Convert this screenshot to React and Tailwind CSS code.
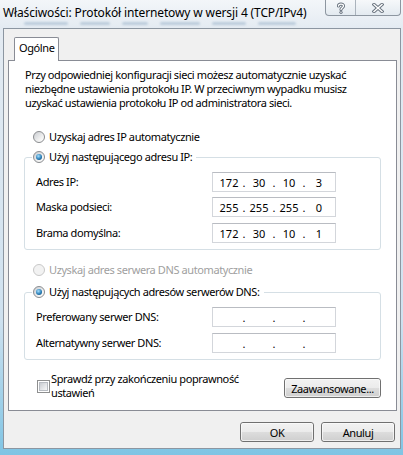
import React from "react";

function Radio({ checked, disabled }) {
  return (
    <span
      className={
        disabled
          ? "relative inline-block w-[12px] h-[12px] rounded-full border border-[#c8c8c8] bg-[#f2f2f2] shrink-0"
          : "relative inline-block w-[12px] h-[12px] rounded-full border border-[#8a8c8f] bg-[linear-gradient(135deg,#c9ccd1_0%,#f4f4f4_70%,#ffffff_100%)] shrink-0"
      }
    >
      {checked && (
        <span className="absolute left-[2px] top-[2px] w-[6px] h-[6px] rounded-full bg-[radial-gradient(circle_at_40%_35%,#a6e0ff_0%,#2a7fb8_55%,#0e3f66_100%)]" />
      )}
    </span>
  );
}

function Checkbox() {
  return (
    <span className="inline-flex items-center justify-center w-[13px] h-[13px] border border-[#8e8f8f] bg-white shrink-0">
      <span className="w-[9px] h-[9px] bg-[linear-gradient(135deg,#c9ccd1_0%,#e6e7e9_60%,#f7f7f7_100%)] border border-[#b8bcc2]" />
    </span>
  );
}

function Btn({ children, w }) {
  return (
    <div
      className={
        "h-[20px] rounded-[3px] border border-[#707070] bg-[linear-gradient(180deg,#f2f2f2_0%,#ebebeb_50%,#dddddd_50%,#cfcfcf_100%)] flex items-center justify-center " +
        w
      }
    >
      <div className="w-full h-full rounded-[2px] border border-[#fcfcfc]/70 flex items-center justify-center leading-none">
        {children}
      </div>
    </div>
  );
}

function IpBox({ parts }) {
  const cell = "w-[26px] text-center";
  const dot = "w-[4px] text-center";
  return (
    <div className="w-[124px] h-[20px] border border-[#d3d6db] border-t-[#b9bcc2] bg-white flex items-center pl-[3px] leading-none tracking-normal">
      <span className={cell}>{parts[0]}</span>
      <span className={dot}>.</span>
      <span className={cell}>{parts[1]}</span>
      <span className={dot}>.</span>
      <span className={cell}>{parts[2]}</span>
      <span className={dot}>.</span>
      <span className={cell}>{parts[3]}</span>
    </div>
  );
}

function Row({ label, parts, className = "" }) {
  return (
    <div className={"flex items-center h-[20px] " + className}>
      <div className="w-[176px] whitespace-nowrap">{label}</div>
      <IpBox parts={parts} />
    </div>
  );
}

export default function App() {
  return (
    <div className="w-[403px] h-[455px] overflow-hidden flex flex-col font-['Noto_Sans',sans-serif] text-[11px] tracking-[-0.4px] text-black bg-[linear-gradient(180deg,#f3f6f9_0%,#e4ebf2_28px,#cfe1ef_70%,#7fc4e4_100%)]">
      {/* title bar */}
      <div className="h-[28px] flex shrink-0">
        <div className="flex-1 flex flex-col">
          <div className="pl-[3px] pt-[5px] text-[12px] tracking-[-0.13px] leading-[16px] whitespace-nowrap">
            Właściwości: Protokół internetowy w wersji 4 (TCP/IPv4)
          </div>
          <div className="pl-[24px] mt-[1px] flex gap-[12px] blur-[1.2px] opacity-60">
            <div className="w-[44px] h-[3px] rounded-full bg-[#9fb6cc]" />
            <div className="w-[30px] h-[3px] rounded-full bg-[#9fb6cc]" />
            <div className="w-[26px] h-[3px] rounded-full bg-[#9fb6cc]" />
            <div className="w-[40px] h-[3px] rounded-full bg-[#9fb6cc]" />
            <div className="w-[34px] h-[3px] rounded-full bg-[#9fb6cc]" />
            <div className="w-[38px] h-[3px] rounded-full bg-[#9fb6cc]" />
          </div>
        </div>
        <div className="flex mr-[2px] h-[16px] border border-t-0 border-[#8d96a0] rounded-b-[4px] bg-[linear-gradient(180deg,#f6f8fa,#e3eaf0)] overflow-hidden">
          <div className="w-[30px] flex items-center justify-center border-r border-[#aab3bc]">
            <svg width="10" height="12" viewBox="0 0 10 12">
              <path d="M2.5 4 C2.5 1.6 7.5 1.4 7.5 4 C7.5 5.6 5 5.8 5 7.6" fill="none" stroke="#6b7580" strokeWidth="3.2" strokeLinecap="round" />
              <circle cx="5" cy="10.3" r="1.6" fill="#6b7580" />
              <path d="M2.5 4 C2.5 1.6 7.5 1.4 7.5 4 C7.5 5.6 5 5.8 5 7.6" fill="none" stroke="#ffffff" strokeWidth="1.3" strokeLinecap="round" />
              <circle cx="5" cy="10.3" r="0.7" fill="#ffffff" />
            </svg>
          </div>
          <div className="w-[44px] flex items-center justify-center">
            <svg width="12" height="10" viewBox="0 0 12 10">
              <path d="M2 1.5 L10 8.5 M10 1.5 L2 8.5" stroke="#6b7580" strokeWidth="3.4" strokeLinecap="square" />
              <path d="M2 1.5 L10 8.5 M10 1.5 L2 8.5" stroke="#ffffff" strokeWidth="1.4" strokeLinecap="square" />
            </svg>
          </div>
        </div>
      </div>

      {/* client area */}
      <div className="ml-[3px] mr-[2px] mb-[6px] flex-1 border border-[#8c96a1] bg-[#f0f0f0] flex flex-col">
        <div className="mt-[8px] ml-[4px] mr-[3px]">
          <div className="flex pl-[6px]">
            <div className="relative z-10 -mb-px h-[24px] px-[4px] border border-b-0 border-[#898c95] bg-white rounded-t-[2px] pt-[2px] leading-[16px]">
              Ogólne
            </div>
          </div>
          <div className="h-[351px] border border-[#898c95] bg-white flex flex-col">
            <div className="pl-[16px] pt-[7px] leading-[14px] whitespace-nowrap">
              Przy odpowiedniej konfiguracji sieci możesz automatycznie uzyskać
              <br />
              niezbędne ustawienia protokołu IP. W przeciwnym wypadku musisz
              <br />
              uzyskać ustawienia protokołu IP od administratora sieci.
            </div>

            <div className="mt-[19px] ml-[24px] h-[16px] flex items-center gap-[4px]">
              <Radio />
              <span>Uzyskaj adres IP automatycznie</span>
            </div>

            <fieldset className="mt-[4px] ml-[15px] w-[357px] border border-[#d5dfe5] rounded-[3px] pb-[6px] pl-[11px]">
              <legend className="ml-[-4px] px-[1px] pr-[4px] h-[16px] flex items-center gap-[4px]">
                <Radio checked />
                <span>Użyj następującego adresu IP:</span>
              </legend>
              <Row className="mt-[7px]" label="Adres IP:" parts={["172", "30", "10", "3"]} />
              <Row className="mt-[5px]" label="Maska podsieci:" parts={["255", "255", "255", "0"]} />
              <Row className="mt-[6px]" label="Brama domyślna:" parts={["172", "30", "10", "1"]} />
            </fieldset>

            <div className="mt-[12px] ml-[24px] h-[16px] flex items-center gap-[4px] text-[#a0a0a0]">
              <Radio disabled />
              <span>Uzyskaj adres serwera DNS automatycznie</span>
            </div>

            <fieldset className="mt-[6px] ml-[15px] w-[357px] border border-[#d5dfe5] rounded-[3px] pb-[6px] pl-[11px]">
              <legend className="ml-[-4px] px-[1px] pr-[4px] h-[16px] flex items-center gap-[4px]">
                <Radio checked />
                <span>Użyj następujących adresów serwerów DNS:</span>
              </legend>
              <Row className="mt-[7px]" label="Preferowany serwer DNS:" parts={["", "", "", ""]} />
              <Row className="mt-[6px]" label="Alternatywny serwer DNS:" parts={["", "", "", ""]} />
            </fieldset>

            <div className="mt-[12px] flex items-start">
              <div className="ml-[28px] flex items-center gap-[1px]">
                <Checkbox />
                <div className="leading-[14px] whitespace-nowrap">
                  Sprawdź przy zakończeniu poprawność
                  <br />
                  ustawień
                </div>
              </div>
              <div className="ml-auto mr-[15px] mt-[6px]">
                <Btn w="w-[97px]">Zaawansowane...</Btn>
              </div>
            </div>
          </div>
        </div>

        <div className="mt-[11px] flex justify-end gap-[7px] mr-[5px]">
          <Btn w="w-[74px]">OK</Btn>
          <Btn w="w-[74px]">Anuluj</Btn>
        </div>
      </div>
    </div>
  );
}
